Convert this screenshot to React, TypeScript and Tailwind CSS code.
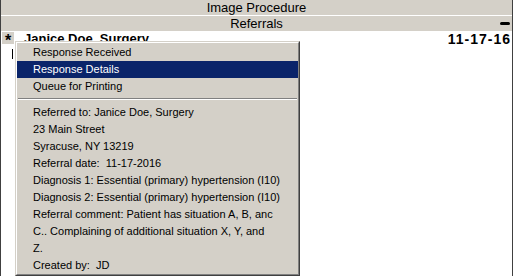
const menuActions = ["Response Received", "Response Details", "Queue for Printing"];

const details = [
  "Referred to: Janice Doe, Surgery",
  "23 Main Street",
  "Syracuse, NY 13219",
  "Referral date:  11-17-2016",
  "Diagnosis 1: Essential (primary) hypertension (I10)",
  "Diagnosis 2: Essential (primary) hypertension (I10)",
  "Referral comment: Patient has situation A, B, anc",
  "C.. Complaining of additional situation X, Y, and",
  "Z.",
  "Created by:  JD",
];

const ContextMenu = () => {
  return (
    <div className="absolute left-[14px] top-[41px] w-[285px] h-[235px] border border-t-[#d4d0c8] border-l-[#d4d0c8] border-r-[#404040] border-b-[#404040] bg-[#d4d0c8]">
      <div className="h-full border border-t-white border-l-white border-r-[#808080] border-b-[#808080] pt-[1px] text-[11px] text-black">
        {menuActions.map((label, i) => (
          <div
            key={label}
            className={`h-[17px] flex items-center pl-[16px] ${i === 1 ? "bg-[#0a246a] text-white" : ""}`}
          >
            {label}
          </div>
        ))}
        <div className="py-[3px] px-[1px]">
          <div className="border-t border-t-[#808080] border-b border-b-white" />
        </div>
        <div className="pt-[1px]">
          {details.map((line) => (
            <div key={line} className="h-[17px] flex items-center pl-[16px] whitespace-pre">
              {line}
            </div>
          ))}
        </div>
      </div>
    </div>
  );
};

const App = () => {
  return (
    <div
      className="relative w-[513px] h-[276px] overflow-hidden bg-white border-l border-r border-[#404040]"
      style={{ fontFamily: '"Liberation Sans", Arial, sans-serif' }}
    >
      <div className="h-[15px] bg-[#d4d0c8] border-b border-white flex items-center justify-center text-[13px] text-black box-content">
        Image Procedure
      </div>
      <div className="relative h-[15px] bg-[#d4d0c8] flex items-center justify-center text-[13px] text-black">
        Referrals
        <div className="absolute right-[2px] top-[6px] w-[10px] h-[3px] rounded-full bg-black" />
      </div>
      <div className="flex items-start h-[14px] mt-[1px]">
        <div className="w-[12px] ml-[1px] h-[12px] bg-[#d4d0c8] flex justify-center text-[16px] font-bold leading-none pt-[1px]">
          *
        </div>
        <div className="ml-[10px] text-[13px] font-bold leading-[14px] text-black">Janice Doe, Surgery</div>
        <div className="ml-auto mr-[1px] text-[14px] font-bold leading-[14px] tracking-[1px] text-black">11-17-16</div>
      </div>
      <div className="ml-[11px] mt-[3px] w-[1px] h-[10px] bg-black" />
      <ContextMenu />
    </div>
  );
};

export default App;
